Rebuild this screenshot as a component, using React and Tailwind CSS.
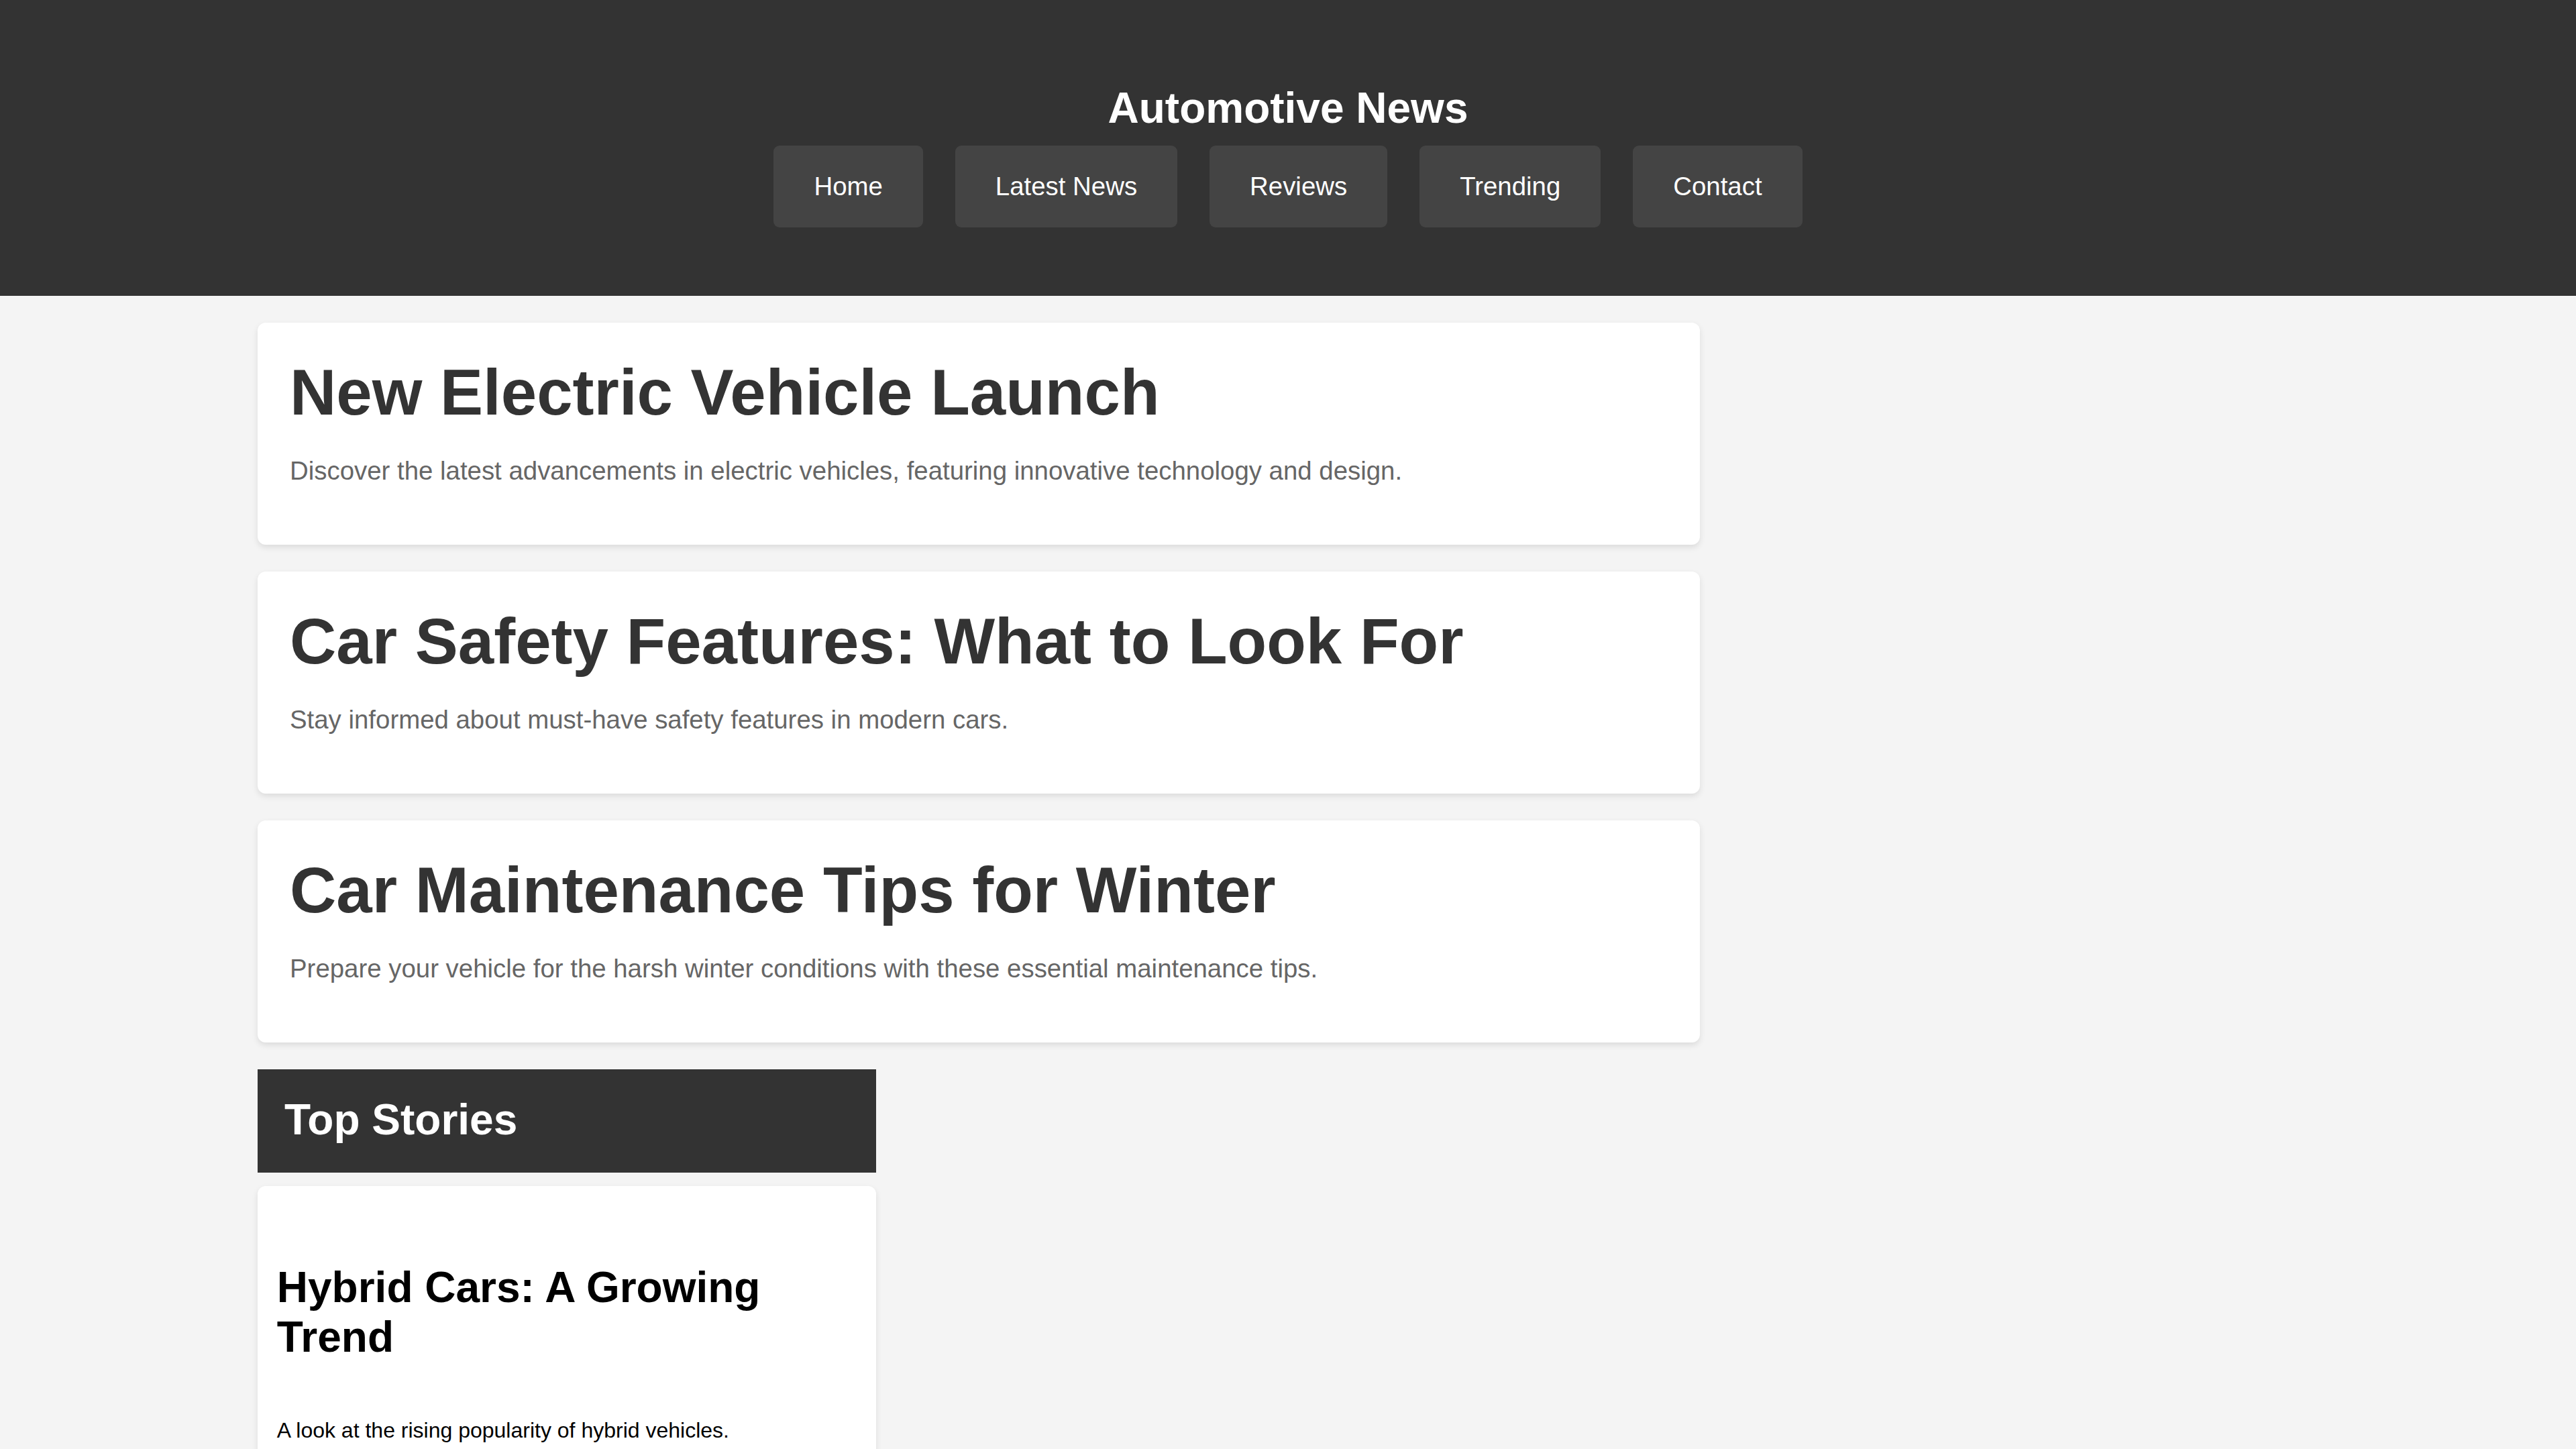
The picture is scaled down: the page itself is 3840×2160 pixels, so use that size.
import React from "react";

const articles = [
  {
    title: "New Electric Vehicle Launch",
    desc: "Discover the latest advancements in electric vehicles, featuring innovative technology and design.",
  },
  {
    title: "Car Safety Features: What to Look For",
    desc: "Stay informed about must-have safety features in modern cars.",
  },
  {
    title: "Car Maintenance Tips for Winter",
    desc: "Prepare your vehicle for the harsh winter conditions with these essential maintenance tips.",
  },
];

const nav = ["Home", "Latest News", "Reviews", "Trending", "Contact"];

export default function App() {
  return (
    <div className="min-h-screen bg-[#f4f4f4] font-['Liberation_Sans',Arial,sans-serif]">
      <header className="bg-[#333333] pt-[124px] pb-[102px] flex flex-col items-center">
        <h1 className="text-[64px] font-bold leading-[normal] text-white m-0">Automotive News</h1>
        <nav className="mt-[19px] flex gap-[48px]">
          {nav.map((n) => (
            <a
              key={n}
              href="#"
              className="bg-[#444444] text-white text-[38.4px] leading-[normal] px-[60px] py-[39px] rounded-[9px]"
            >
              {n}
            </a>
          ))}
        </nav>
      </header>

      <main className="w-[80%] mx-auto pt-[40px]">
        <div className="w-[70%] flex flex-col gap-[40px]">
          {articles.map((a) => (
            <article
              key={a.title}
              className="bg-white rounded-[12px] px-[48px] pt-[49px] pb-[88px] shadow-[0_4px_10px_rgba(0,0,0,0.1)]"
            >
              <h2 className="text-[96px] font-bold leading-[normal] text-[#333333]">{a.title}</h2>
              <p className="mt-[40px] text-[38.4px] leading-[normal] text-[#666666]">{a.desc}</p>
            </article>
          ))}
        </div>

        <aside className="w-[30%] mt-[40px]">
          <div className="bg-[#333333] px-[40px] pt-[38px] pb-[42px]">
            <h2 className="text-[64px] font-bold leading-[normal] text-white">Top Stories</h2>
          </div>
          <div className="mt-[20px] bg-white rounded-[12px] px-[28.8px] pt-[114px] pb-[88px] shadow-[0_4px_10px_rgba(0,0,0,0.1)]">
            <h2 className="text-[64px] font-bold leading-[normal] text-black">Hybrid Cars: A Growing Trend</h2>
            <p className="mt-[84px] text-[32px] leading-[normal] text-black">
              A look at the rising popularity of hybrid vehicles.
            </p>
          </div>
        </aside>
      </main>
    </div>
  );
}
